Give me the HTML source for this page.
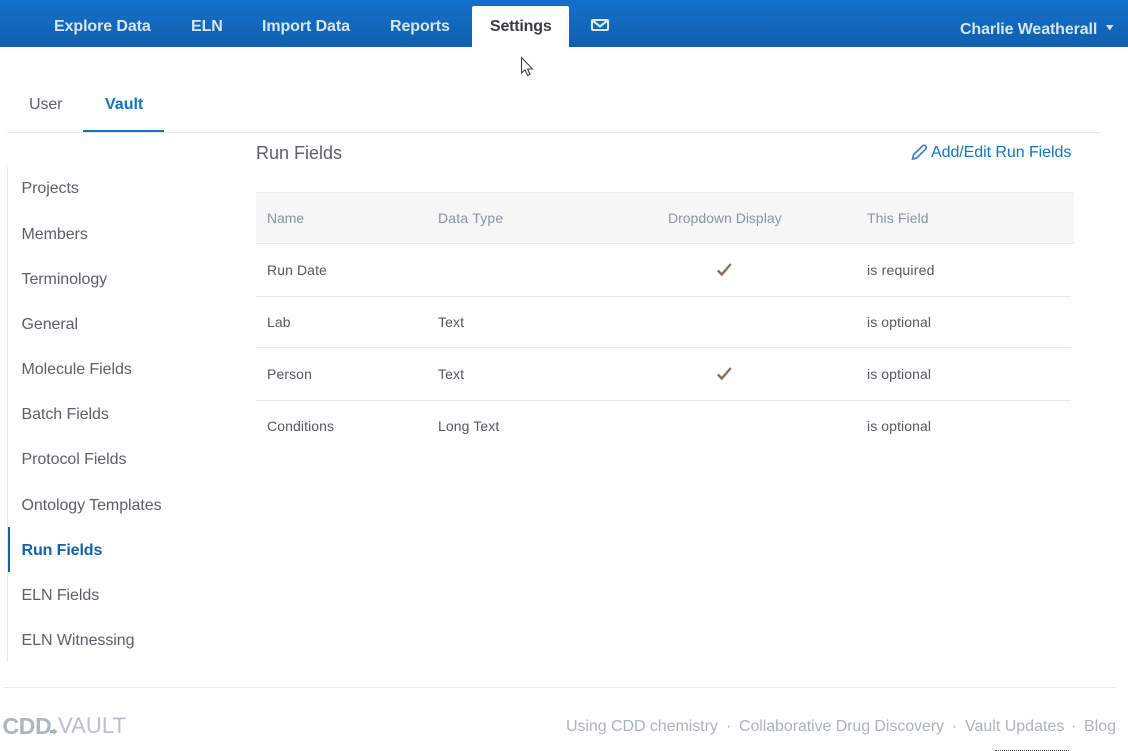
<!DOCTYPE html>
<html><head><meta charset="utf-8">
<style>
html,body{margin:0;padding:0;background:#fff}
body{width:1128px;height:751px;position:relative;overflow:hidden;font-family:"Liberation Sans",sans-serif}
.t{position:absolute;white-space:nowrap;line-height:20px}
.n{font-size:16px;font-weight:bold;color:#d6e6f4;top:17px;letter-spacing:-.09px}
.s{font-size:16px;color:#5d6068;left:21.5px;letter-spacing:-.06px}
.h{font-size:14px;color:#8a93a5;top:208px}
.c{font-size:14px;color:#555861;letter-spacing:.1px}
.l{position:absolute;height:1px;background:#e8e8e8}
.f{font-size:16px;color:#a9b4c0;top:715px;margin-top:2px;letter-spacing:-.06px}
</style></head><body>
<div style="position:absolute;left:0;top:0;width:1128px;height:47px;background:linear-gradient(#1271cc,#115fae)"></div>
<div style="position:absolute;left:472px;top:6px;width:97px;height:41px;background:#fff;border-radius:2px 2px 0 0"></div>
<div class="t n" style="left:54px">Explore Data</div>
<div class="t n" style="left:191px">ELN</div>
<div class="t n" style="left:262px">Import Data</div>
<div class="t n" style="left:390px">Reports</div>
<div class="t n" style="left:490px;color:#3a3d42;letter-spacing:-.2px">Settings</div>
<svg style="position:absolute;left:591px;top:19px" width="18" height="12" viewBox="0 0 18 12"><rect x="1" y="1" width="16" height="10" rx="1" fill="none" stroke="#dbe9f5" stroke-width="2"/><path d="M1.500 1.500L9 7.500L16.500 1.500" fill="none" stroke="#dbe9f5" stroke-width="2.200"/></svg>
<div class="t n" style="left:960px;top:18px;margin-top:1.500px;letter-spacing:-.12px">Charlie Weatherall</div>
<svg style="position:absolute;left:1106px;top:25px" width="8" height="6"><path d="M0 0H7.500L3.750 5.500Z" fill="#d6e6f4"/></svg>
<svg style="position:absolute;left:520px;top:56px" width="16" height="22" viewBox="0 0 16 22"><path d="M1.500 1.500V17L5 13.800L7.500 19.500L10 18.500L7.600 13H12.500Z" fill="#fff" stroke="#33363b" stroke-width="1"/></svg>

<div class="t" style="left:29px;top:93px;margin-top:1.500px;font-size:16px;color:#5d6068;letter-spacing:-.1px">User</div>
<div class="t" style="left:105px;top:93px;margin-top:1.500px;font-size:16px;font-weight:bold;color:#0f75c9">Vault</div>
<div class="l" style="left:7px;top:132px;width:1094px;background:#e4e4e4"></div>
<div style="position:absolute;left:83px;top:130px;width:81px;height:2px;background:#0f75c9"></div>

<div style="position:absolute;left:7px;top:167px;width:1px;height:495px;background:#e8e8e8"></div>
<div style="position:absolute;left:8px;top:527px;width:2px;height:45px;background:#0f62b0"></div>
<div class="t s" style="top:179px">Projects</div>
<div class="t s" style="top:225px">Members</div>
<div class="t s" style="top:270px">Terminology</div>
<div class="t s" style="top:315px">General</div>
<div class="t s" style="top:360px">Molecule Fields</div>
<div class="t s" style="top:405px">Batch Fields</div>
<div class="t s" style="top:450px">Protocol Fields</div>
<div class="t s" style="top:496px">Ontology Templates</div>
<div class="t s" style="top:541px;font-weight:bold;color:#0f62b0;letter-spacing:-.1px">Run Fields</div>
<div class="t s" style="top:586px">ELN Fields</div>
<div class="t s" style="top:631px">ELN Witnessing</div>

<div class="t" style="left:256px;top:143px;font-size:18px;color:#5d6068">Run Fields</div>
<svg style="position:absolute;left:911px;top:144px" width="17" height="16" viewBox="0 0 17 16"><path d="M2.500 10.800L11.500 2C12.400 1.100 13.700 1.100 14.600 2C15.500 2.900 15.500 4.200 14.600 5.100L5.600 14L1.600 15Z" fill="none" stroke="#4a86c5" stroke-width="1.800"/></svg>
<div class="t" style="left:931px;top:142.500px;font-size:16px;color:#0f75c9;letter-spacing:-.06px">Add/Edit Run Fields</div>

<div style="position:absolute;left:256px;top:192px;width:818px;height:51px;background:#f6f6f6;border-top:1px solid #ececec;box-sizing:border-box"></div>
<div class="l" style="left:256px;top:243px;width:818px"></div>
<div class="l" style="left:256px;top:296px;width:815px"></div>
<div class="l" style="left:256px;top:347px;width:815px"></div>
<div class="l" style="left:256px;top:400px;width:815px"></div>

<div class="t h" style="left:267px;letter-spacing:-.1px">Name</div>
<div class="t h" style="left:438px;letter-spacing:.2px">Data Type</div>
<div class="t h" style="left:668px">Dropdown Display</div>
<div class="t h" style="left:867px;letter-spacing:.1px">This Field</div>

<div class="t c" style="left:267px;top:260px">Run Date</div>
<div class="t c" style="left:867px;top:260px;letter-spacing:.2px">is required</div>
<div class="t c" style="left:267px;top:312px">Lab</div>
<div class="t c" style="left:438px;top:312px">Text</div>
<div class="t c" style="left:867px;top:312px">is optional</div>
<div class="t c" style="left:267px;top:364px">Person</div>
<div class="t c" style="left:438px;top:364px">Text</div>
<div class="t c" style="left:867px;top:364px">is optional</div>
<div class="t c" style="left:267px;top:416px">Conditions</div>
<div class="t c" style="left:438px;top:416px">Long Text</div>
<div class="t c" style="left:867px;top:416px">is optional</div>
<svg style="position:absolute;left:716px;top:263px" width="17" height="14" viewBox="0 0 17 14"><path d="M1.800 7.500L5.800 11.500L14.800 1" fill="none" stroke="#936a5c" stroke-width="2.400"/></svg>
<svg style="position:absolute;left:716px;top:367px" width="17" height="14" viewBox="0 0 17 14"><path d="M1.800 7.500L5.800 11.500L14.800 1" fill="none" stroke="#936a5c" stroke-width="2.400"/></svg>

<div class="l" style="left:3px;top:687px;width:1113px;background:#ececec"></div>
<div class="t" style="left:2.500px;top:712.500px;font-size:23px;font-weight:bold;color:#aab7c2;letter-spacing:-.3px;line-height:26px">CDD</div>
<svg style="position:absolute;left:50px;top:728px" width="8" height="8" viewBox="0 0 8 8"><path d="M0 2H3.500V0L7.500 3.500L3.500 7V5H0Z" fill="#aab7c2"/></svg>
<div class="t" style="left:58px;top:712.500px;font-size:22px;color:#b6c1cb;line-height:26px;letter-spacing:.1px">VAULT</div>
<div class="t f" style="left:566px">Using CDD chemistry</div>
<div class="t f" style="left:726px">·</div>
<div class="t f" style="left:739px;letter-spacing:-.08px">Collaborative Drug Discovery</div>
<div class="t f" style="left:952px">·</div>
<div class="t f" style="left:965px;letter-spacing:0">Vault Updates</div>
<div class="t f" style="left:1071px">·</div>
<div class="t f" style="left:1084px;letter-spacing:0">Blog</div>
<div style="position:absolute;left:995px;top:750px;width:74px;height:0;border-top:1px dotted #444"></div>
</body></html>
